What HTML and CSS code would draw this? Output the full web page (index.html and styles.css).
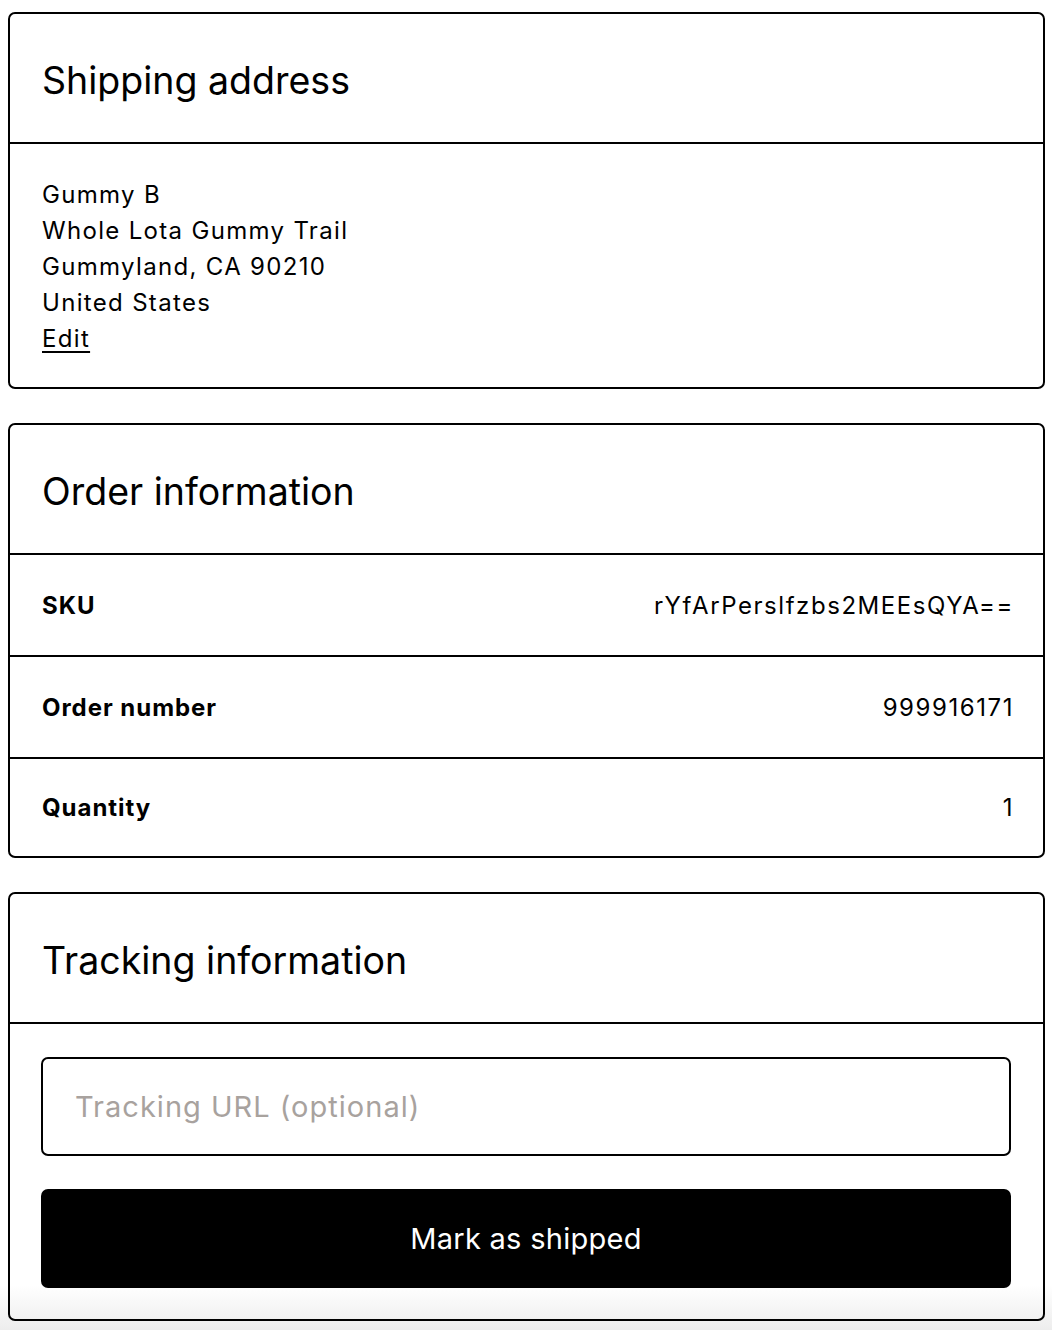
FILE: index.html
```html
<!DOCTYPE html>
<html lang="en">
<head>
<meta charset="utf-8">
<title>Order</title>
<link rel="stylesheet" href="styles.css">
</head>
<body>
<main class="page">
  <section class="card">
    <header class="card-head"><h2 class="card-title">Shipping address</h2></header>
    <div class="card-body address">
      <div>Gummy B</div>
      <div>Whole Lota Gummy Trail</div>
      <div>Gummyland, CA 90210</div>
      <div>United States</div>
      <a class="edit" href="#">Edit</a>
    </div>
  </section>

  <section class="card">
    <header class="card-head"><h2 class="card-title">Order information</h2></header>
    <div class="row"><span class="label">SKU</span><span class="value">rYfArPerslfzbs2MEEsQYA==</span></div>
    <div class="row"><span class="label">Order number</span><span class="value">999916171</span></div>
    <div class="row"><span class="label">Quantity</span><span class="value">1</span></div>
  </section>

  <section class="card">
    <header class="card-head"><h2 class="card-title">Tracking information</h2></header>
    <div class="card-body tracking">
      <input class="input" type="text" placeholder="Tracking URL (optional)">
      <button class="btn" type="button">Mark as shipped</button>
    </div>
  </section>
</main>
</body>
</html>
```

FILE: styles.css
```css
* { box-sizing: border-box; }
html {
  margin: 0;
  padding: 0;
  min-height: 100%;
  background: linear-gradient(to bottom, #ffffff 0, #ffffff 1285px, #ededed 1330px) no-repeat;
  background-color: #ededed;
}
body {
  margin: 0;
  padding: 0;
  font-family: Inter, "Liberation Sans", sans-serif;
  color: #000;
  font-size: 24px;
  line-height: 36px;
  letter-spacing: 0.055em;
}
.page {
  padding: 12px 7px 8px 8px;
  display: flex;
  flex-direction: column;
  gap: 34px;
}
.card {
  border: 2px solid #000;
  border-radius: 7px;
  overflow: hidden;
  background: transparent;
}
.card-head {
  height: 130px;
  border-bottom: 2px solid #000;
  display: flex;
  align-items: center;
  padding: 0 32px;
}
.card-title {
  margin: 0;
  font-size: 37.5px;
  font-weight: 400;
  line-height: 48px;
  padding-top: 5px;
  letter-spacing: 0;
}
.card-body { padding: 32px 32px; }
.address { display: flex; flex-direction: column; padding-top: 33px; padding-bottom: 30px; }
.edit {
  color: #000;
  text-decoration: underline;
  text-underline-offset: 4px;
  text-decoration-thickness: 2px;
  align-self: flex-start;
}
.row {
  height: 102px;
  display: flex;
  align-items: center;
  justify-content: space-between;
  padding: 1px 31px 0 32px;
  border-bottom: 2px solid #000;
}
.row:last-child { border-bottom: none; height: 97px; }
.label { font-weight: 700; letter-spacing: 0.04em; }
.value { font-weight: 400; letter-spacing: 0.065em; margin-right: -2px; }
.tracking {
  display: flex;
  flex-direction: column;
  gap: 33px;
  padding: 33px 32px 31px 31px;
}
.input {
  height: 99px;
  border: 2px solid #000;
  border-radius: 7px;
  padding: 0 32px;
  font-family: inherit;
  font-size: 29px;
  letter-spacing: 0.035em;
  color: #000;
  background: #fff;
  outline: none;
}
.input::placeholder { color: #a8a29e; }
.btn {
  height: 99px;
  border: none;
  border-radius: 7px;
  background: #000;
  color: #fff;
  font-family: inherit;
  font-size: 29px;
  letter-spacing: 0.01em;
}
```
